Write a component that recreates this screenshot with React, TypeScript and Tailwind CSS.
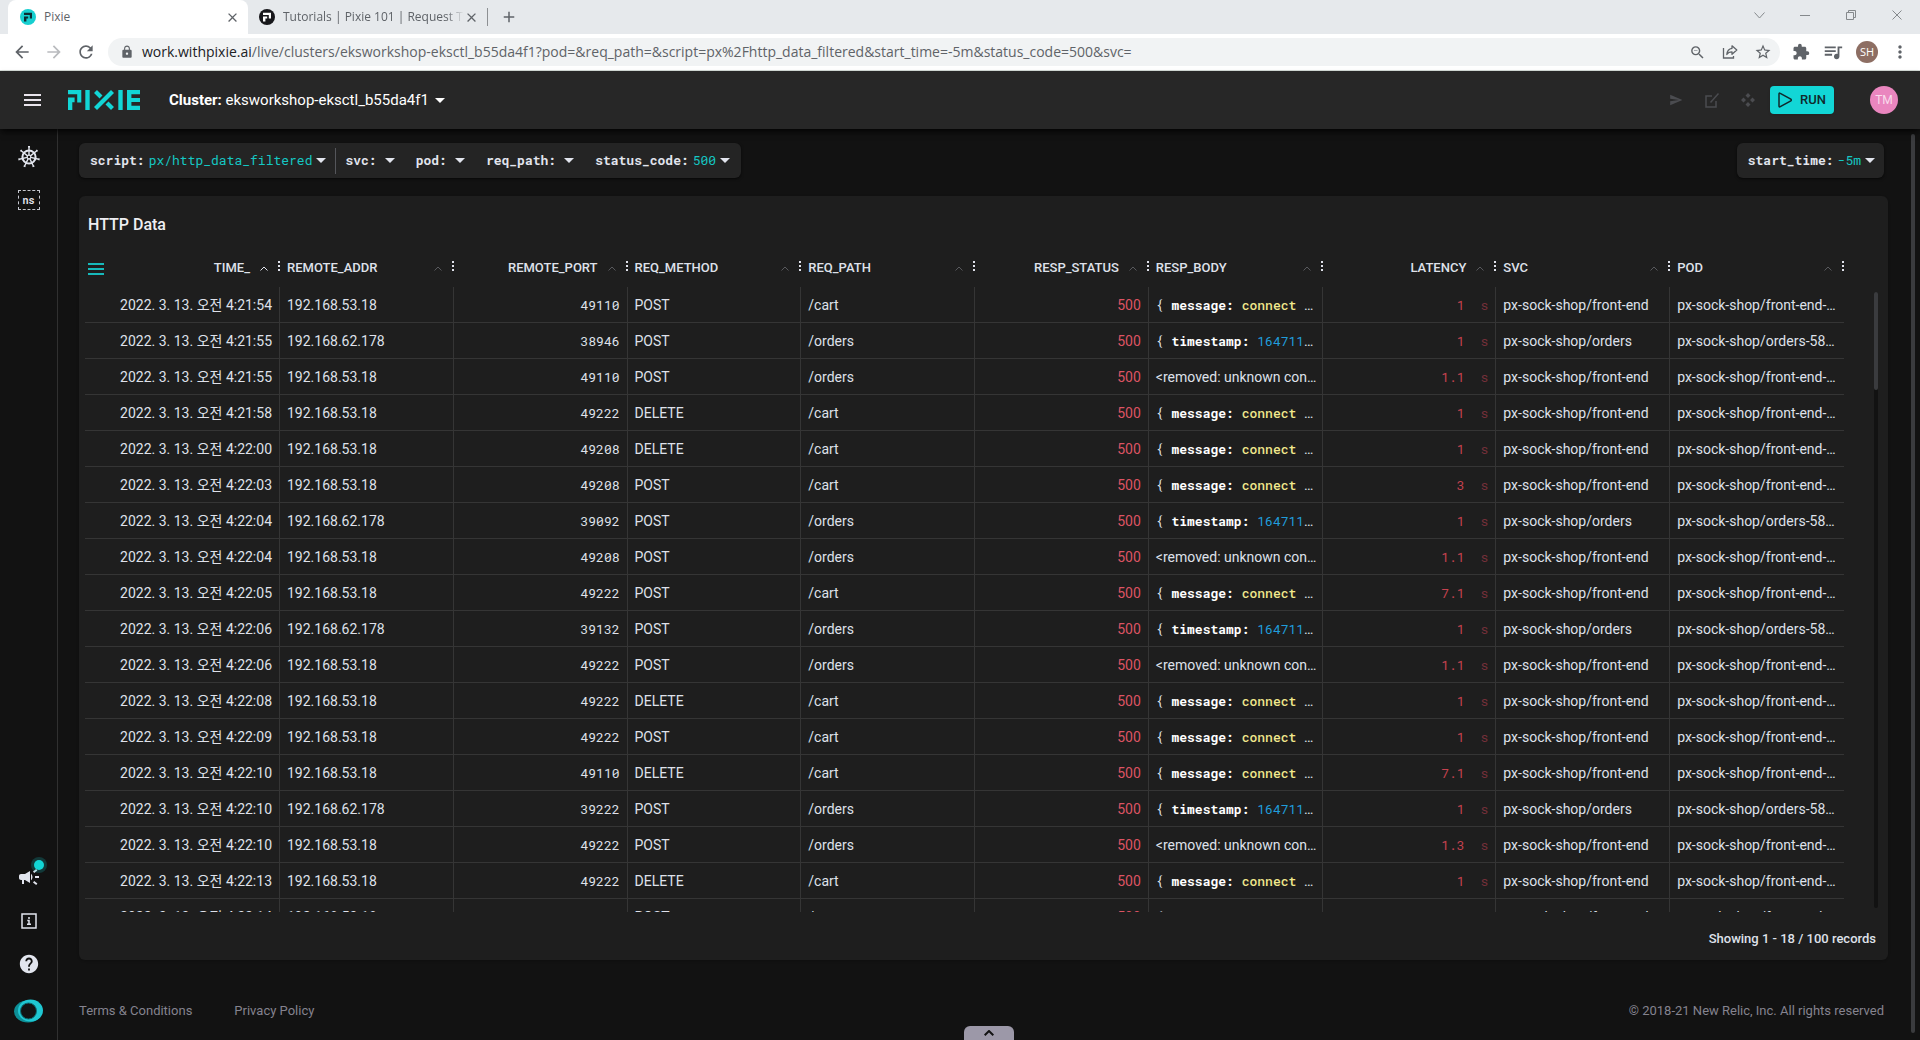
import React from "react";
import {
  MdAdd,
  MdArrowBack,
  MdArrowForward,
  MdCampaign,
  MdClose,
  MdExtension,
  MdHelp,
  MdLock,
  MdMoreVert,
  MdQueueMusic,
  MdRefresh,
  MdSend,
  MdStarOutline,
  MdZoomOut,
} from "react-icons/md";

const BROWSER_FONT = "font-['Open_Sans','Noto_Sans',sans-serif]";
const MONO_FONT = "font-['Roboto_Mono','Liberation_Mono',monospace]";

type BodyKind = "message" | "timestamp" | "removed";

interface Row {
  time: string;
  addr: string;
  port: string;
  method: string;
  path: string;
  body: BodyKind;
  latency: string;
}

const A = "192.168.53.18";
const B = "192.168.62.178";

const row = (
  time: string,
  addr: string,
  port: string,
  method: string,
  path: string,
  body: BodyKind,
  latency: string,
): Row => ({ time, addr, port, method, path, body, latency });

const rows: Row[] = [
  row("4:21:54", A, "49110", "POST", "/cart", "message", "1"),
  row("4:21:55", B, "38946", "POST", "/orders", "timestamp", "1"),
  row("4:21:55", A, "49110", "POST", "/orders", "removed", "1.1"),
  row("4:21:58", A, "49222", "DELETE", "/cart", "message", "1"),
  row("4:22:00", A, "49208", "DELETE", "/cart", "message", "1"),
  row("4:22:03", A, "49208", "POST", "/cart", "message", "3"),
  row("4:22:04", B, "39092", "POST", "/orders", "timestamp", "1"),
  row("4:22:04", A, "49208", "POST", "/orders", "removed", "1.1"),
  row("4:22:05", A, "49222", "POST", "/cart", "message", "7.1"),
  row("4:22:06", B, "39132", "POST", "/orders", "timestamp", "1"),
  row("4:22:06", A, "49222", "POST", "/orders", "removed", "1.1"),
  row("4:22:08", A, "49222", "DELETE", "/cart", "message", "1"),
  row("4:22:09", A, "49222", "POST", "/cart", "message", "1"),
  row("4:22:10", A, "49110", "DELETE", "/cart", "message", "7.1"),
  row("4:22:10", B, "39222", "POST", "/orders", "timestamp", "1"),
  row("4:22:10", A, "49222", "POST", "/orders", "removed", "1.3"),
  row("4:22:13", A, "49222", "DELETE", "/cart", "message", "1"),
  row("4:22:14", A, "49222", "POST", "/cart", "message", "1"),
];

const columns = [
  { name: "TIME_", right: true, sorted: true },
  { name: "REMOTE_ADDR" },
  { name: "REMOTE_PORT", right: true },
  { name: "REQ_METHOD" },
  { name: "REQ_PATH" },
  { name: "RESP_STATUS", right: true },
  { name: "RESP_BODY" },
  { name: "LATENCY", right: true },
  { name: "SVC" },
  { name: "POD" },
];

function Favicon({ disc, mark }: { disc: string; mark: string }) {
  return (
    <svg width="16" height="16" viewBox="0 0 16 16" className="shrink-0" aria-hidden="true">
      <circle cx="8" cy="8" r="8" fill={disc} />
      <path d="M4 3.8h8v5.8h-2.2V6H4zM4 7.4h4.2v2H6.4v3H4z" fill={mark} />
    </svg>
  );
}

function PixieLogo() {
  return (
    <svg width="72" height="20" viewBox="0 0 72 20" fill="#12d6d6" role="img" aria-label="Pixie">
      <path d="M0 0h13.3v12.6H9.2V4.2H0z" />
      <path d="M0 7.6h6.6v4.6H4.3V20H0z" />
      <path d="M17.3 0h4.4v20h-4.4z" />
      <path d="M27.5 18.5 44.5 1.5" stroke="#12d6d6" strokeWidth="4.2" />
      <path d="m27.5 1.5 5.5 5.5M39 13l5.5 5.5" stroke="#12d6d6" strokeWidth="4.2" />
      <path d="M50.3 0h4.4v20h-4.4z" />
      <path d="M59 0h13v4.2h-8.6v3.7H72v4.2h-8.6v3.7H72V20H59z" />
    </svg>
  );
}

function Helm() {
  const spokes = [0, 1, 2, 3, 4, 5, 6];
  return (
    <svg width="22" height="22" viewBox="0 0 22 22" fill="none" stroke="#e2e5ee" aria-hidden="true">
      <circle cx="11" cy="11" r="6.6" strokeWidth="2" />
      <circle cx="11" cy="11" r="1.8" strokeWidth="1.2" />
      {spokes.map((n) => (
        <path
          key={n}
          d="M11 9.2V1M10 .8h2"
          strokeWidth="1.4"
          transform={`rotate(${(n * 360) / 7} 11 11)`}
        />
      ))}
    </svg>
  );
}

function Triangle() {
  return (
    <svg width="10" height="5" viewBox="0 0 10 5" fill="currentColor" className="shrink-0" aria-hidden="true">
      <path d="M0 0h10L5 5z" />
    </svg>
  );
}

function Hamburger({ width, color }: { width: number; color: string }) {
  return (
    <svg width={width} height="12" viewBox="0 0 16 12" preserveAspectRatio="none" fill={color} aria-hidden="true">
      <path d="M0 0h16v2H0zM0 5h16v2H0zM0 10h16v2H0z" />
    </svg>
  );
}

function BrowserBar() {
  return (
    <div className={`${BROWSER_FONT} shrink-0 border-b border-[#d5dcd8] bg-white text-[#5f6368]`}>
      <div className="flex h-[34px] items-stretch bg-[#e6e9ec] pl-2 text-xs">
        <div className="flex w-60 items-center gap-2 rounded-t-lg bg-white pr-2 pl-3">
          <Favicon disc="#17cfd0" mark="#0c2b33" />
          <span className="flex-1">Pixie</span>
          <button type="button" aria-label="Close tab">
            <MdClose size={15} />
          </button>
        </div>
        <div className="flex w-[239px] items-center pr-2 pl-[11px]">
          <Favicon disc="#17171b" mark="#ffffff" />
          <span className="ml-2 min-w-0 flex-1 mask-r-from-90% whitespace-nowrap">
            Tutorials | Pixie 101 | Request Tr
          </span>
          <button type="button" aria-label="Close tab">
            <MdClose size={15} />
          </button>
        </div>
        <span className="my-2 w-px bg-[#8d9093]" />
        <button type="button" aria-label="New tab" className="px-3">
          <MdAdd size={18} />
        </button>
        <div className="ml-auto flex items-center pb-1 text-[#85898c]">
          <button type="button" aria-label="Search tabs" className="flex w-[46px] justify-center">
            <svg width="11" height="7" fill="none" stroke="currentColor">
              <path d="m.5.5 5 5.5 5-5.5" />
            </svg>
          </button>
          <button type="button" aria-label="Minimize" className="flex w-[46px] justify-center">
            <svg width="10" height="10" fill="none" stroke="currentColor">
              <path d="M0 5.5h10" />
            </svg>
          </button>
          <button type="button" aria-label="Restore" className="flex w-[46px] justify-center">
            <svg width="10" height="10" fill="none" stroke="currentColor">
              <path d="M.5 2.5h7v7h-7zM2.5 2.5v-2h7v7h-2" />
            </svg>
          </button>
          <button type="button" aria-label="Close" className="flex w-[46px] justify-center">
            <svg width="10" height="10" fill="none" stroke="currentColor">
              <path d="m.5.5 9 9m0-9-9 9" />
            </svg>
          </button>
        </div>
      </div>
      <div className="flex h-9 items-center pr-3 pl-3">
        <div className="flex items-center gap-3 pr-3">
          <button type="button" aria-label="Back"><MdArrowBack size={20} /></button>
          <button type="button" aria-label="Forward" className="text-[#b9bbbe]"><MdArrowForward size={20} /></button>
          <button type="button" aria-label="Reload"><MdRefresh size={20} /></button>
        </div>
        <div className="flex h-7 flex-1 items-center gap-2 rounded-full bg-[#f1f3f4] pr-2 pl-3">
          <MdLock size={14} className="shrink-0" />
          <div className="flex-1 text-sm whitespace-nowrap">
            <span className="text-[#202124]">work.withpixie.ai</span>
            /live/clusters/eksworkshop-eksctl_b55da4f1?pod=&amp;req_path=&amp;script=px%2Fhttp_data_filtered&amp;start_time=-5m&amp;status_code=500&amp;svc=
          </div>
          <div className="flex items-center gap-4">
            <button type="button" aria-label="Zoom out"><MdZoomOut size={17} /></button>
            <button type="button" aria-label="Share">
              <svg width="16" height="16" viewBox="0 0 16 16" fill="none" stroke="currentColor" strokeWidth="1.3">
                <path d="M1.5 4v10h10v-2" />
                <path d="M10 1.8 14.8 6 10 10.2V7.8c-2.5 0-4 .7-5.2 2.7.3-3.3 2-5.7 5.2-6.2z" strokeLinejoin="round" />
              </svg>
            </button>
            <button type="button" aria-label="Bookmark"><MdStarOutline size={18} /></button>
          </div>
        </div>
        <div className="flex items-center gap-3 pl-3">
          <button type="button" aria-label="Extensions"><MdExtension size={18} /></button>
          <button type="button" aria-label="Media"><MdQueueMusic size={22} /></button>
          <span className="flex size-[22px] items-center justify-center rounded-full bg-[#8d6e63] text-[11px] text-white">
            SH
          </span>
          <button type="button" aria-label="Menu" className="-mr-0.5"><MdMoreVert size={20} /></button>
        </div>
      </div>
    </div>
  );
}

function AppHeader() {
  return (
    <header className="z-10 flex h-[58px] shrink-0 items-center bg-[#272727] pr-[22px] pl-6 shadow-md shadow-black/60">
      <button type="button" aria-label="Open menu">
        <Hamburger width={17} color="#e9e4ec" />
      </button>
      <a href="#home" className="ml-[27px]">
        <PixieLogo />
      </a>
      <button type="button" className="ml-[29px] flex items-center gap-1.5 text-[15px] text-white">
        <span>
          <b className="font-bold">Cluster:</b> eksworkshop-eksctl_b55da4f1
        </span>
        <Triangle />
      </button>
      <div className="ml-auto flex items-center text-[#4b4c50]">
        <button type="button" aria-label="Share" className="flex w-9 justify-center">
          <MdSend size={14} />
        </button>
        <button type="button" aria-label="Edit" className="flex w-9 justify-center">
          <svg width="14" height="15" viewBox="0 0 14 15" fill="none" stroke="currentColor" strokeWidth="1.5">
            <path d="M7 3H1v11h10V8" />
            <path d="m5.5 9.5 8-9" />
          </svg>
        </button>
        <button type="button" aria-label="Move widgets" className="mr-1 flex w-9 justify-center">
          <svg width="14" height="14" viewBox="0 0 14 14" fill="currentColor">
            <path d="m7 0 2.5 2.5L7 5 4.5 2.5zM7 9l2.5 2.5L7 14l-2.5-2.5zM2.5 4.5 5 7 2.5 9.5 0 7zM11.5 4.5 14 7l-2.5 2.5L9 7z" />
          </svg>
        </button>
        <button
          type="button"
          className="flex h-7 items-center gap-2 rounded bg-[#12d6d6] px-2 text-[13px] font-medium text-[#10292b] shadow"
        >
          <svg width="14" height="16" viewBox="0 0 14 16" fill="none" stroke="currentColor" strokeWidth="1.5">
            <path d="M1 2v12q0 1.5 1.3.7L12.8 8.8q1-.8 0-1.6L2.3 1.3Q1 .5 1 2z" />
          </svg>
          RUN
        </button>
        <span className="ml-9 flex size-7 items-center justify-center rounded-full bg-[#ea86bf] text-xs text-[#f9dcec]">
          TM
        </span>
      </div>
    </header>
  );
}

function Sidebar() {
  return (
    <nav className="flex w-[58px] shrink-0 flex-col items-center border-r border-[#303030] pt-[17px] pb-[17px] text-[#e2e5ee]">
      <a href="#cluster" aria-label="Cluster">
        <Helm />
      </a>
      <a
        href="#namespaces"
        className={`${MONO_FONT} mt-[22px] flex h-5 w-[22px] items-center justify-center border border-dashed border-[#c6c8d0] text-[10px] font-bold`}
      >
        ns
      </a>
      <a href="#announcements" aria-label="Announcements" className="relative mt-auto">
        <MdCampaign size={24} />
        <span className="absolute -top-2 -right-1.5 flex size-4 items-center justify-center rounded-full bg-[#12d6d6]/20">
          <span className="size-2.5 rounded-full bg-[#12d6d6]" />
        </span>
      </a>
      <a href="#docs" aria-label="Information" className="mt-6">
        <svg width="16" height="16" viewBox="0 0 16 16" fill="none" stroke="currentColor" strokeWidth="1.5">
          <path d="M1 1h14v14H1z" />
          <path d="M8 4v2M6.3 7.5H8V11M6 11.3h4" />
        </svg>
      </a>
      <a href="#help" aria-label="Help" className="mt-6">
        <MdHelp size={22} />
      </a>
      <a href="#newrelic" aria-label="New Relic" className="mt-6">
        <svg width="30" height="24" viewBox="0 0 30 24">
          <ellipse cx="14" cy="12.5" rx="14" ry="11" fill="#0d8f97" />
          <ellipse cx="16.5" cy="11.5" rx="12.5" ry="11" fill="#1fc7d2" />
          <circle cx="14.5" cy="12" r="8" fill="#131313" stroke="#0b6f76" />
        </svg>
      </a>
    </nav>
  );
}

function Param({ label, value }: { label: string; value?: string }) {
  return (
    <button type="button" className="flex items-center gap-1">
      <span className="font-bold">{label}:</span>
      <span className="text-[#15c7c3]">{value}</span>
      <Triangle />
    </button>
  );
}

function ParamBar() {
  return (
    <div className={`${MONO_FONT} flex justify-between pr-1 text-[13px] text-[#e2e5ee]`}>
      <div className="flex h-[35px] items-center rounded-md bg-[#242424] px-[11px] shadow shadow-black/50">
        <Param label="script" value="px/http_data_filtered" />
        <span className="mx-[9px] h-[26px] w-px bg-[#55565b]" />
        <div className="flex gap-[21px]">
          <Param label="svc" />
          <Param label="pod" />
          <Param label="req_path" />
          <Param label="status_code" value="500" />
        </div>
      </div>
      <div className="flex h-[35px] items-center rounded-md bg-[#242424] pr-[9px] pl-[11px] shadow shadow-black/50">
        <Param label="start_time" value="-5m" />
      </div>
    </div>
  );
}

function ResponseBody({ kind }: { kind: BodyKind }) {
  if (kind === "removed") {
    return <>&lt;removed: unknown con…</>;
  }
  return (
    <>
      <span className={`${MONO_FONT} text-[13px]`}>
        {"{ "}
        <b className="font-bold text-white">{kind}:</b>{" "}
        {kind === "message" ? (
          <span className="font-medium text-[#f0e78c]">connect </span>
        ) : (
          <span className="text-[#209ddb]">164711</span>
        )}
      </span>
      …
    </>
  );
}

function Cell({
  children,
  right = false,
  last = false,
}: {
  children: React.ReactNode;
  right?: boolean;
  last?: boolean;
}) {
  return (
    <td
      className={`${right ? "pr-[7px] text-right" : "pr-0"} ${last ? "" : "border-r"} h-9 truncate border-b border-[#353535] py-0 pl-[7px]`}
    >
      {children}
    </td>
  );
}

function DataTable() {
  return (
    <table className="w-full table-fixed border-separate border-spacing-0 text-sm text-[#dfe1ea]">
      <colgroup>
        <col className="w-[195px]" />
        {columns.slice(1).map((c) => (
          <col key={c.name} />
        ))}
      </colgroup>
      <thead>
        <tr>
          {columns.map((c, i) => (
            <th key={c.name} scope="col" className="h-[57px] p-0 pt-5 pl-[7px] text-[13px] font-medium">
              <div className="flex items-center">
                {i === 0 && (
                  <button type="button" aria-label="Columns" className="-ml-1">
                    <Hamburger width={16} color="#17b9bb" />
                  </button>
                )}
                <span className={c.right ? "ml-auto" : ""}>{c.name}</span>
                <svg
                  width="8"
                  height="5"
                  fill="none"
                  stroke={c.sorted ? "#dfe1ea" : "#58595d"}
                  className={c.right ? "mr-2.5 ml-2.5" : "mr-2.5 ml-auto"}
                  aria-hidden="true"
                >
                  <path d="m.5 4.5 3.5-3.5 3.5 3.5" />
                </svg>
                <svg width="2" height="11" fill="#dfe1ea" className="mb-1" aria-hidden="true">
                  <path d="M0 0h2v2H0zM0 4h2v2H0zM0 8h2v2H0z" />
                </svg>
              </div>
            </th>
          ))}
        </tr>
      </thead>
      <tbody>
        {rows.map((r, i) => {
          const orders = r.addr === B;
          return (
            <tr key={i}>
              <Cell right>2022. 3. 13. 오전 {r.time}</Cell>
              <Cell>{r.addr}</Cell>
              <Cell right>
                <span className={`${MONO_FONT} text-[13px]`}>{r.port}</span>
              </Cell>
              <Cell>{r.method}</Cell>
              <Cell>{r.path}</Cell>
              <Cell right>
                <span className="text-[#dd5463]">500</span>
              </Cell>
              <Cell>
                <ResponseBody kind={r.body} />
              </Cell>
              <Cell right>
                <span className={`${MONO_FONT} text-[13px] text-[#c5424f]`}>
                  {r.latency}
                  <span className="ml-4 text-[#75303a]">s</span>
                </span>
              </Cell>
              <Cell>{orders ? "px-sock-shop/orders" : "px-sock-shop/front-end"}</Cell>
              <Cell last>{orders ? "px-sock-shop/orders-58…" : "px-sock-shop/front-end-…"}</Cell>
            </tr>
          );
        })}
      </tbody>
    </table>
  );
}

export default function App() {
  return (
    <div className="flex h-screen flex-col overflow-hidden bg-[#121212] font-['Roboto','Noto_Sans_CJK_KR',sans-serif]">
      <BrowserBar />
      <AppHeader />
      <div className="flex min-h-0 flex-1">
        <Sidebar />
        <main className="relative flex min-w-0 flex-1 pt-[5px]">
          <div className="flex min-w-0 flex-1 flex-col pt-[9px] pr-[23px] pl-[21px]">
            <ParamBar />
            <section className="mt-[18px] flex min-h-0 flex-1 flex-col rounded-md bg-[#1e1e1e] shadow">
              <h2 className="px-[9px] pt-[17px] text-base leading-6 font-medium text-[#eeeef2]">HTTP Data</h2>
              <div className="flex min-h-0 flex-1 pr-[10px] pl-1.5">
                <div className="-mt-[7px] min-w-0 flex-1 overflow-hidden">
                  <DataTable />
                </div>
                <div className="mt-[55px] mb-1 ml-[30px] w-1 rounded-full bg-[#121212]">
                  <div className="h-[98px] rounded-full bg-[#3a3b3e]" />
                </div>
              </div>
              <p className="flex h-12 items-center justify-end pt-1.5 pr-3 text-[13px] font-medium text-[#dfe1ea]">
                Showing 1 - 18 / 100 records
              </p>
            </section>
            <footer className="flex h-20 items-center gap-[42px] pt-[22px] pr-1 text-[13px] text-[#85838f]">
              <a href="#terms">Terms &amp; Conditions</a>
              <a href="#privacy">Privacy Policy</a>
              <span className="ml-auto">© 2018-21 New Relic, Inc. All rights reserved</span>
            </footer>
          </div>
          <div className="mr-[5px] mb-[7px] w-1 rounded-full bg-[#3a3b3e]" />
          <button
            type="button"
            aria-label="Open drawer"
            className="absolute bottom-0 left-1/2 flex h-3.5 w-[50px] -translate-x-1/2 justify-center rounded-t-md bg-[#9c98a8] pt-1"
          >
            <svg width="10" height="6" fill="none" stroke="#131313" strokeWidth="2">
              <path d="m.7 5.3 4.3-4.3 4.3 4.3" />
            </svg>
          </button>
        </main>
      </div>
    </div>
  );
}
